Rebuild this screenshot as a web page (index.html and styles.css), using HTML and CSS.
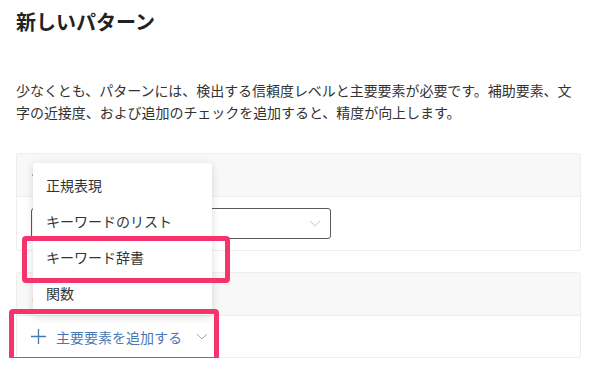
FILE: index.html
```html
<!DOCTYPE html>
<html lang="ja">
<head>
    <meta charset="UTF-8">
    <title>新しいパターン</title>
    <link rel="stylesheet" href="styles.css">
</head>
<body>
    <div class="page">
        <h1 class="title">新しいパターン</h1>
        <p class="intro">少なくとも、パターンには、検出する信頼度レベルと主要要素が必要です。補助要素、文字の近接度、および追加のチェックを追加すると、精度が向上します。</p>

        <div class="panel">
            <div class="panel-head">信頼度レベル</div>
            <div class="panel-body">
                <div class="select">
                    <svg class="select-arrow" width="12" height="7" viewBox="0 0 12 7"><path d="M1 1 L6 6 L11 1" fill="none" stroke="#c8c8c8" stroke-width="1"/></svg>
                </div>
            </div>
        </div>

        <div class="panel">
            <div class="panel-head">主要要素</div>
            <div class="panel-body small">
                <button class="add-btn">
                    <svg width="15" height="15" viewBox="0 0 15 15"><path d="M7.5 0 V15 M0 7.5 H15" stroke="#4a78b4" stroke-width="1.3"/></svg>
                    <span>主要要素を追加する</span>
                    <svg class="btn-arrow" width="12" height="7" viewBox="0 0 12 7"><path d="M1 1 L6 6 L11 1" fill="none" stroke="#9aa9be" stroke-width="1"/></svg>
                </button>
            </div>
        </div>

        <!-- ドロップダウン -->
        <ul class="menu">
            <li>正規表現</li>
            <li>キーワードのリスト</li>
            <li>キーワード辞書</li>
            <li>関数</li>
        </ul>

        <div class="mark mark-item"></div>
        <div class="mark mark-btn"></div>
    </div>
</body>
</html>
```

FILE: styles.css
```css
* {
    margin: 0;
    padding: 0;
    box-sizing: border-box;
}

body {
    background: #fff;
    font-family: "Noto Sans CJK JP", "Noto Sans", sans-serif;
    color: #333;
}

.page {
    position: relative;
    padding: 8px 14px 0 16px;
}

.title {
    font-size: 20px;
    font-weight: 600;
    color: #222;
    line-height: 28px;
}

.intro {
    margin-top: 43px;
    font-size: 14px;
    line-height: 22px;
    color: #333;
    letter-spacing: -0.05px;
}

.panel {
    border: 1px solid #eeeeee;
    border-radius: 2px;
    margin-top: 21px;
}

.intro + .panel {
    margin-top: 30px;
}

.panel-head {
    height: 43px;
    background-color: #f8f8f8;
    border-bottom: 1px solid #eeeeee;
    padding: 0 15px;
    font-size: 14px;
    line-height: 42px;
    color: #333;
}

.panel-body {
    height: 53px;
    padding: 0 14px;
    display: flex;
    align-items: center;
}

.panel-body.small {
    height: 41px;
}

.select {
    width: 300px;
    height: 31px;
    border: 1px solid #5a5a5a;
    border-radius: 3px;
    display: flex;
    align-items: center;
    justify-content: flex-end;
    padding: 0 9px 0 10px;
}

.add-btn {
    display: flex;
    align-items: center;
    gap: 10px;
    border: none;
    background: none;
    font-family: inherit;
    font-size: 14px;
    color: #4a78b4;
    padding-left: 0;
    cursor: pointer;
}

.btn-arrow {
    margin-left: 4px;
}

.menu {
    position: absolute;
    left: 33px;
    top: 163px;
    width: 179px;
    list-style: none;
    background: #fff;
    border-radius: 3px;
    box-shadow: 0 2px 8px rgba(0, 0, 0, 0.14);
    padding: 4px 0;
}

.menu li {
    height: 36px;
    line-height: 36px;
    padding-left: 13px;
    font-size: 14px;
    color: #333;
}

.mark {
    position: absolute;
    border: 5px solid #f7336d;
    border-radius: 4px;
}

.mark-item {
    left: 22px;
    top: 236px;
    width: 208px;
    height: 47px;
}

.mark-btn {
    left: 9px;
    top: 309px;
    width: 210px;
    height: 53px;
}
```
